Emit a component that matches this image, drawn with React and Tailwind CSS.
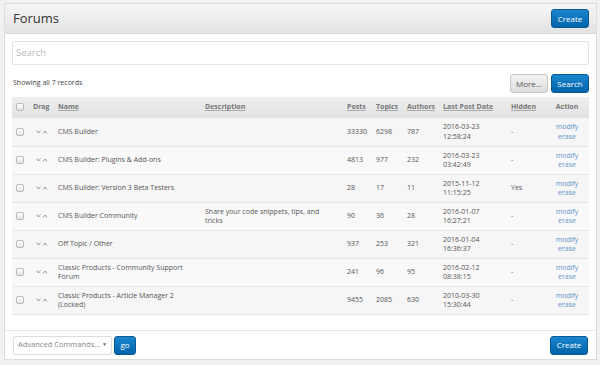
import React from "react";

const rows = [
  { name: "CMS Builder", desc: "", posts: "33330", topics: "6298", authors: "787", date: "2016-03-23", time: "12:58:24", hidden: "-" },
  { name: "CMS Builder: Plugins & Add-ons", desc: "", posts: "4813", topics: "977", authors: "232", date: "2016-03-23", time: "03:42:49", hidden: "-" },
  { name: "CMS Builder: Version 3 Beta Testers", desc: "", posts: "28", topics: "17", authors: "11", date: "2015-11-12", time: "11:15:25", hidden: "Yes" },
  { name: "CMS Builder Community", desc: "Share your code snippets, tips, and tricks", posts: "90", topics: "36", authors: "28", date: "2016-01-07", time: "16:27:21", hidden: "-" },
  { name: "Off Topic / Other", desc: "", posts: "937", topics: "253", authors: "321", date: "2016-01-04", time: "16:36:37", hidden: "-" },
  { name: "Classic Products - Community Support Forum", desc: "", posts: "241", topics: "96", authors: "95", date: "2016-02-12", time: "08:38:15", hidden: "-" },
  { name: "Classic Products - Article Manager 2 (Locked)", desc: "", posts: "9455", topics: "2085", authors: "630", date: "2010-03-30", time: "15:30:44", hidden: "-" },
];

function Box() {
  return <span className="inline-block w-[8px] h-[8px] border border-[#bbb] rounded-[2px] bg-gradient-to-b from-white to-[#e4e4e4] align-middle" />;
}

function BlueBtn({ children, className = "" }) {
  return (
    <button className={`h-[19px] rounded-[3px] border border-[#0b5a94] bg-gradient-to-b from-[#1a86cf] to-[#0064aa] text-white text-[8px] leading-none ${className}`}>
      {children}
    </button>
  );
}

function Arrows() {
  return (
    <svg width="12" height="6" viewBox="0 0 12 6" className="inline-block">
      <path d="M0.5 1.5 L2.5 4 L4.5 1.5" fill="none" stroke="#888" strokeWidth="0.9" />
      <path d="M7 4.5 L9 2 L11 4.5" fill="none" stroke="#888" strokeWidth="0.9" />
    </svg>
  );
}

export default function App() {
  const th = "text-left font-bold text-[7px] text-[#777] underline decoration-[#aaa] px-[4px] whitespace-nowrap";
  return (
    <div className="w-[600px] h-[365px] bg-[#f1f1f1] pt-[3px] px-[4px]" style={{ fontFamily: '"Open Sans", "Noto Sans", sans-serif' }}>
      <div className="w-[593px] h-[357px] bg-white border border-[#dcdcdc] flex flex-col">
        <div className="h-[30px] flex items-center justify-between pl-[8px] pr-[7px] bg-gradient-to-b from-[#f6f6f6] to-[#e3e3e3] border-b border-[#d8d8d8]">
          <span className="text-[13px] text-[#333] leading-none">Forums</span>
          <BlueBtn className="w-[38px]">Create</BlueBtn>
        </div>
        <div className="px-[7px] pt-[7px]">
          <div className="h-[24px] border border-[#e3e3e3] rounded-[2px] flex items-center px-[3px] text-[9.5px] text-[#bbb]">Search</div>
          <div className="flex items-center justify-between mt-[9px] h-[19px]">
            <span className="text-[7px] text-[#444] pl-[1px]">Showing all 7 records</span>
            <div className="flex gap-[3px]">
              <button className="h-[19px] w-[38px] rounded-[3px] border border-[#c8c8c8] bg-gradient-to-b from-[#f3f3f3] to-[#dedede] text-[#555] text-[8px] leading-none">More...</button>
              <BlueBtn className="w-[38px]">Search</BlueBtn>
            </div>
          </div>
          <table className="w-full mt-[4px] border-collapse table-fixed text-[7px] text-[#555]">
            <colgroup>
              <col className="w-[18px]" />
              <col className="w-[24px]" />
              <col className="w-[147px]" />
              <col className="w-[142px]" />
              <col className="w-[29px]" />
              <col className="w-[31px]" />
              <col className="w-[36px]" />
              <col className="w-[68px]" />
              <col className="w-[38px]" />
              <col />
            </colgroup>
            <thead>
              <tr className="h-[21px] bg-gradient-to-b from-[#efefef] to-[#e2e2e2]">
                <th className="pl-[4px] text-left"><Box /></th>
                <th className="text-left font-bold text-[7px] text-[#777] pl-[3px]">Drag</th>
                <th className={th}>Name</th>
                <th className={th}>Description</th>
                <th className={th}>Posts</th>
                <th className={th}>Topics</th>
                <th className={th}>Authors</th>
                <th className={th}>Last Post Date</th>
                <th className={th}>Hidden</th>
                <th className="text-center font-bold text-[7px] text-[#777]">Action</th>
              </tr>
            </thead>
            <tbody>
              {rows.map((r, i) => (
                <tr key={r.name} className={`h-[28px] border-b border-[#e6e6e6] ${i % 2 === 0 ? "bg-[#f6f6f6]" : "bg-[#f9f9f9]"}`}>
                  <td className="pl-[4px]"><Box /></td>
                  <td className="pl-[6px]"><Arrows /></td>
                  <td className="px-[4px] leading-[9.5px] pr-[14px]">{r.name}</td>
                  <td className="px-[4px] leading-[9.5px] pr-[20px]">{r.desc}</td>
                  <td className="px-[4px]">{r.posts}</td>
                  <td className="px-[4px]">{r.topics}</td>
                  <td className="px-[4px]">{r.authors}</td>
                  <td className="px-[4px] leading-[9.5px]">{r.date}<br />{r.time}</td>
                  <td className="px-[4px]">{r.hidden}</td>
                  <td className="text-center leading-[9.5px] text-[#5b95cc]">modify<br />erase</td>
                </tr>
              ))}
            </tbody>
          </table>
        </div>
        <div className="flex-1" />
        <div className="h-[29px] border-t border-[#e6e6e6] flex items-center justify-between px-[8px]">
          <div className="flex items-center gap-[2px]">
            <div className="h-[19px] w-[99px] border border-[#ddd] rounded-[2px] flex items-center justify-between px-[4px] text-[7.5px] text-[#888]">
              <span className="whitespace-nowrap">Advanced Commands...</span>
              <span className="text-[5px] text-[#666]">▼</span>
            </div>
            <BlueBtn className="w-[22px]">go</BlueBtn>
          </div>
          <BlueBtn className="w-[38px]">Create</BlueBtn>
        </div>
      </div>
    </div>
  );
}
